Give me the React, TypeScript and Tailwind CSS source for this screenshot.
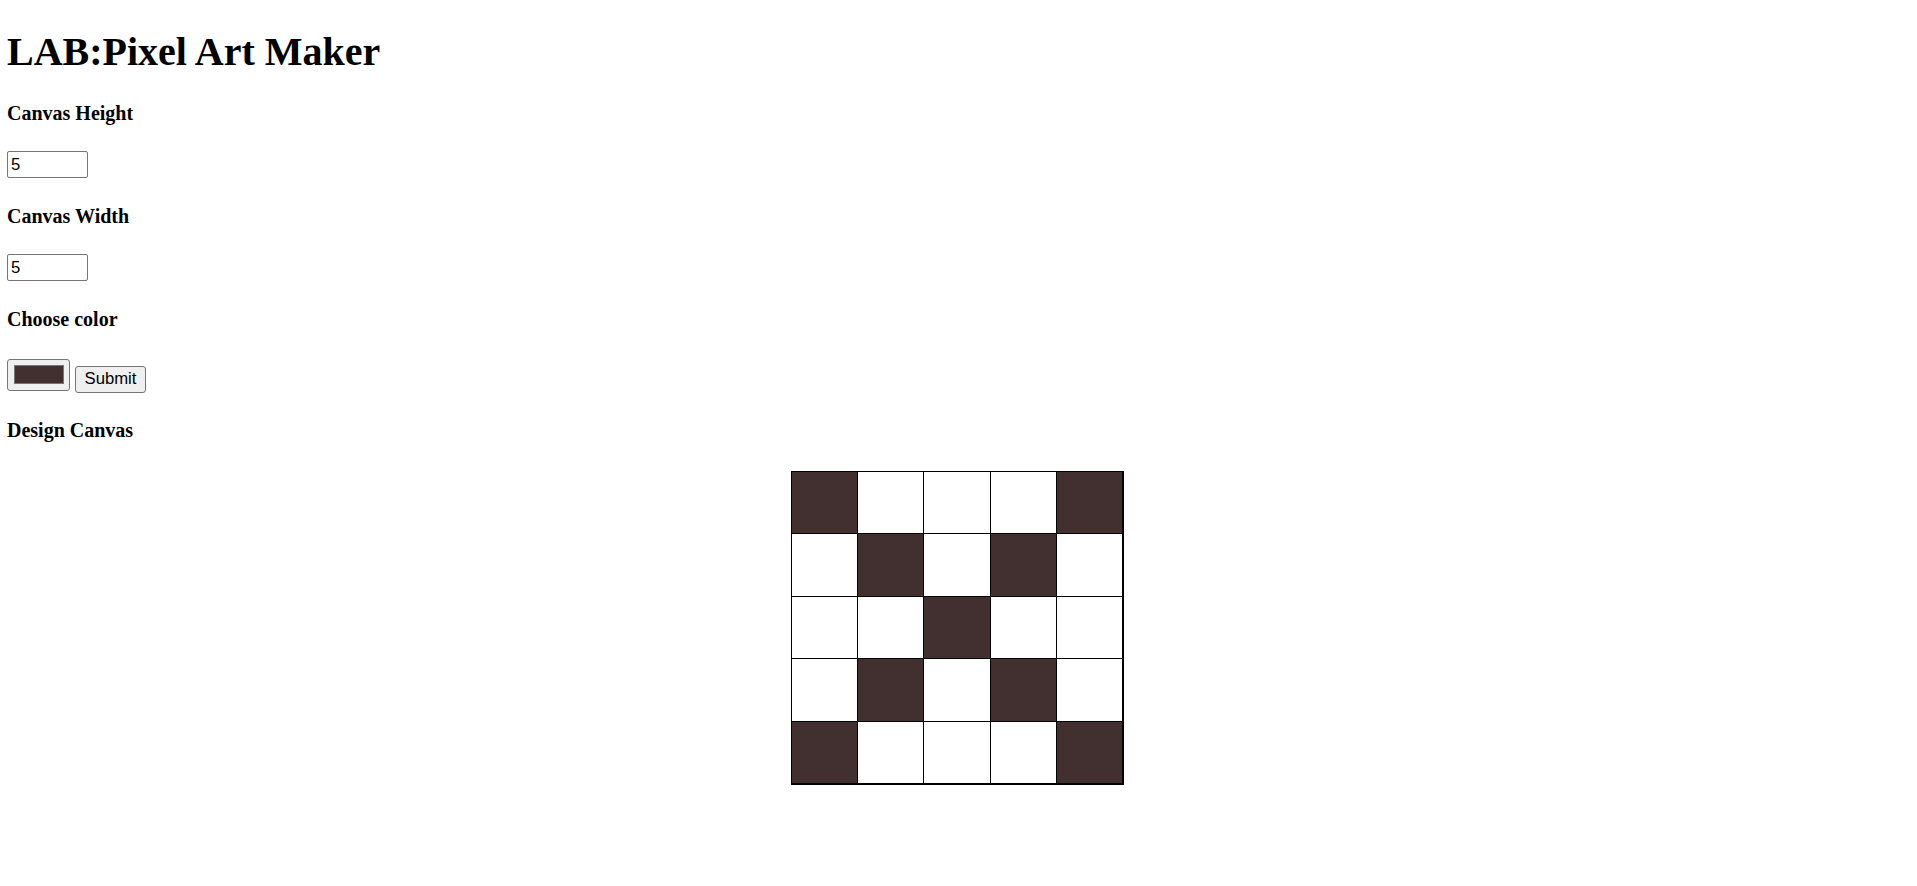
import { useState } from "react";

const INK = "#423031";

const start = [
  [1, 0, 0, 0, 1],
  [0, 1, 0, 1, 0],
  [0, 0, 1, 0, 0],
  [0, 1, 0, 1, 0],
  [1, 0, 0, 0, 1],
];

export default function App() {
  const [color, setColor] = useState(INK);
  const [height, setHeight] = useState("5");
  const [width, setWidth] = useState("5");
  const [cells, setCells] = useState<(string | null)[][]>(
    start.map((row) => row.map((v) => (v ? INK : null)))
  );

  const paint = (r: number, c: number) => {
    setCells((prev) =>
      prev.map((row, i) => row.map((v, j) => (i === r && j === c ? (v ? null : color) : v)))
    );
  };

  const submit = () => {
    setCells(Array.from({ length: 5 }, () => Array(5).fill(null)));
  };

  return (
    <div className="min-h-screen bg-white px-[7px] pt-px pb-[40px] text-black" style={{ fontFamily: '"Liberation Serif", "Times New Roman", serif' }}>
      <h1 className="mt-[28px] mb-[26.6px] text-[40px] leading-[46px] font-bold">LAB:Pixel Art Maker</h1>

      <h4 className="my-[26.6px] text-[20px] leading-[23px] font-bold">Canvas Height</h4>
      <div className="h-[27px]">
        <input
          type="number"
          value={height}
          onChange={(e) => setHeight(e.target.value)}
          className="h-[27px] w-[81px] rounded-[2px] border border-[#767676] bg-white px-[3px] text-[16.7px] text-black outline-none [appearance:textfield] [&::-webkit-inner-spin-button]:appearance-none"
          style={{ fontFamily: '"Liberation Sans", Arial, sans-serif' }}
        />
      </div>

      <h4 className="my-[26.6px] text-[20px] leading-[23px] font-bold">Canvas Width</h4>
      <div className="h-[27px]">
        <input
          type="number"
          value={width}
          onChange={(e) => setWidth(e.target.value)}
          className="h-[27px] w-[81px] rounded-[2px] border border-[#767676] bg-white px-[3px] text-[16.7px] text-black outline-none [appearance:textfield] [&::-webkit-inner-spin-button]:appearance-none"
          style={{ fontFamily: '"Liberation Sans", Arial, sans-serif' }}
        />
      </div>

      <h4 className="my-[26.6px] text-[20px] leading-[23px] font-bold">Choose color</h4>
      <div className="flex h-[35px] items-start">
        <label className="relative mt-[1px] flex h-[32px] w-[63px] cursor-pointer items-center justify-center rounded-[3px] border border-[#767676] bg-[#efefef]">
          <span className="h-[19px] w-[50px] border border-[#767676]" style={{ background: color }} />
          <input type="color" value={color} onChange={(e) => setColor(e.target.value)} className="absolute inset-0 h-full w-full cursor-pointer opacity-0" />
        </label>
        <button
          onClick={submit}
          className="mt-[8px] ml-[5px] h-[27px] w-[71px] rounded-[3px] border border-[#767676] bg-[#efefef] text-[16.7px] leading-none text-black"
          style={{ fontFamily: '"Liberation Sans", Arial, sans-serif' }}
        >
          Submit
        </button>
      </div>

      <h4 className="my-[26.6px] text-[20px] leading-[23px] font-bold">Design Canvas</h4>
      <div className="mt-[29px] flex justify-center pr-[3px]">
        <div className="grid w-fit grid-cols-[65px_65px_66px_65px_65px] grid-rows-[61px_62px_61px_62px_61px] gap-px bg-black pt-px pr-[2px] pb-[2px] pl-px">
          {cells.map((row, r) =>
            row.map((v, c) => (
              <div
                key={`${r}-${c}`}
                onClick={() => paint(r, c)}
                className="cursor-pointer"
                style={{ background: v ?? "#ffffff" }}
              />
            ))
          )}
        </div>
      </div>
    </div>
  );
}
